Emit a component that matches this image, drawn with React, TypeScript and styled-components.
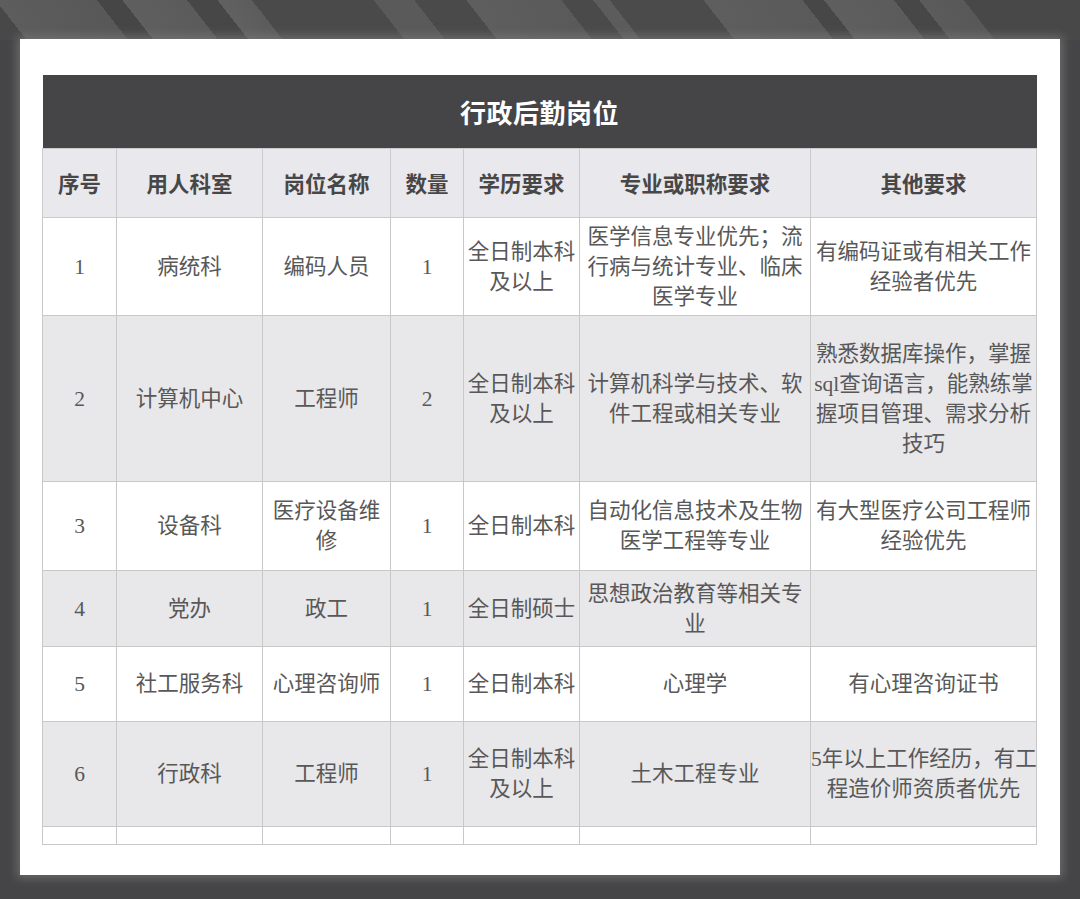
import React from "react";
import styled, { createGlobalStyle } from "styled-components";

const GlobalStyle = createGlobalStyle`
  html, body {
    margin: 0;
    padding: 0;
  }

  body {
    background:
      linear-gradient(
          52deg,
          #484848 0px,
          #484848 21px,
          #5d5d5d 21px,
          #585858 101px,
          #464646 101px,
          #464646 121px,
          #5f5f5f 121px,
          #5b5b5b 172px,
          #474747 172px,
          #474747 196px,
          #616161 196px,
          #5c5c5c 223px,
          #4a4a4a 223px,
          #4a4a4a 319px,
          #5a5a5a 319px,
          #5a5a5a 351px,
          #4a4a4a 351px,
          #4a4a4a 392px,
          #5e5e5e 392px,
          #5a5a5a 467px,
          #4a4a4a 467px,
          #4a4a4a 492px,
          #5c5c5c 492px,
          #5c5c5c 505px,
          #4b4b4b 505px,
          #4b4b4b 579px,
          #5e5e5e 579px,
          #5a5a5a 657px,
          #474747 657px,
          #474747 674px,
          #5f5f5f 674px,
          #5b5b5b 729px,
          #474747 729px,
          #474747 749px,
          #5b5b5b 749px,
          #585858 784px,
          #484848 784px,
          #484848 900px
        )
        top left / 100% 40px no-repeat,
      #454547;
    font-family: "Liberation Serif", "Noto Sans CJK SC", serif;
  }
`;

const Page = styled.div`
  padding: 39px 20px 25px;
`;

const Card = styled.div`
  background: #ffffff;
  padding: 36px 24px 30px 22px;
  box-shadow: 0 0 9px 3px rgba(120, 120, 120, 0.75);
`;

const Table = styled.table`
  width: 994px;
  border-collapse: collapse;
  table-layout: fixed;
`;

const TitleCell = styled.th`
  height: 73px;
  padding: 0;
  background: #454547;
  color: #ffffff;
  font-family: "Noto Sans CJK SC", sans-serif;
  font-size: 26px;
  font-weight: 700;
  letter-spacing: 0.5px;
  text-align: center;
`;

const HeadCell = styled.th`
  height: 68px;
  padding: 0;
  background: #e9e8ec;
  border: 1px solid #cacaca;
  color: #474747;
  font-family: "Noto Sans CJK SC", sans-serif;
  font-size: 21.5px;
  font-weight: 700;
  line-height: 28px;
  text-align: center;
`;

const Row = styled.tr<{ $shade: boolean; $height: number }>`
  height: ${({ $height }) => $height}px;
  background: ${({ $shade }) => ($shade ? "#e8e7ea" : "#ffffff")};
`;

const Cell = styled.td`
  padding: 0;
  border: 1px solid #c8c8c8;
  color: #585858;
  font-size: 21.5px;
  line-height: 30px;
  text-align: center;
  vertical-align: middle;
  white-space: nowrap;
`;

const columns = [
  { title: "序号", width: 74 },
  { title: "用人科室", width: 146 },
  { title: "岗位名称", width: 128 },
  { title: "数量", width: 73 },
  { title: "学历要求", width: 116 },
  { title: "专业或职称要求", width: 231 },
  { title: "其他要求", width: 226 },
];

type Job = { height: number; cells: string[][] };

const jobs: Job[] = [
  {
    height: 98,
    cells: [
      ["1"],
      ["病统科"],
      ["编码人员"],
      ["1"],
      ["全日制本科", "及以上"],
      ["医学信息专业优先；流", "行病与统计专业、临床", "医学专业"],
      ["有编码证或有相关工作", "经验者优先"],
    ],
  },
  {
    height: 166,
    cells: [
      ["2"],
      ["计算机中心"],
      ["工程师"],
      ["2"],
      ["全日制本科", "及以上"],
      ["计算机科学与技术、软", "件工程或相关专业"],
      ["熟悉数据库操作，掌握", "sql查询语言，能熟练掌", "握项目管理、需求分析", "技巧"],
    ],
  },
  {
    height: 89,
    cells: [
      ["3"],
      ["设备科"],
      ["医疗设备维", "修"],
      ["1"],
      ["全日制本科"],
      ["自动化信息技术及生物", "医学工程等专业"],
      ["有大型医疗公司工程师", "经验优先"],
    ],
  },
  {
    height: 76,
    cells: [
      ["4"],
      ["党办"],
      ["政工"],
      ["1"],
      ["全日制硕士"],
      ["思想政治教育等相关专", "业"],
      [],
    ],
  },
  {
    height: 75,
    cells: [
      ["5"],
      ["社工服务科"],
      ["心理咨询师"],
      ["1"],
      ["全日制本科"],
      ["心理学"],
      ["有心理咨询证书"],
    ],
  },
  {
    height: 105,
    cells: [
      ["6"],
      ["行政科"],
      ["工程师"],
      ["1"],
      ["全日制本科", "及以上"],
      ["土木工程专业"],
      ["5年以上工作经历，有工", "程造价师资质者优先"],
    ],
  },
  {
    height: 18,
    cells: [[], [], [], [], [], [], []],
  },
];

const Lines = ({ lines }: { lines: string[] }) => (
  <>
    {lines.map((line, i) => (
      <React.Fragment key={i}>
        {i > 0 && <br />}
        {line}
      </React.Fragment>
    ))}
  </>
);

export default function App() {
  return (
    <>
      <GlobalStyle />
      <Page>
        <Card>
          <Table>
            <colgroup>
              {columns.map((col) => (
                <col key={col.title} style={{ width: col.width }} />
              ))}
            </colgroup>
            <thead>
              <tr>
                <TitleCell colSpan={columns.length}>行政后勤岗位</TitleCell>
              </tr>
              <tr>
                {columns.map((col) => (
                  <HeadCell key={col.title}>{col.title}</HeadCell>
                ))}
              </tr>
            </thead>
            <tbody>
              {jobs.map((job, r) => (
                <Row key={r} $shade={r % 2 === 1} $height={job.height}>
                  {job.cells.map((lines, c) => (
                    <Cell key={c}>
                      <Lines lines={lines} />
                    </Cell>
                  ))}
                </Row>
              ))}
            </tbody>
          </Table>
        </Card>
      </Page>
    </>
  );
}
